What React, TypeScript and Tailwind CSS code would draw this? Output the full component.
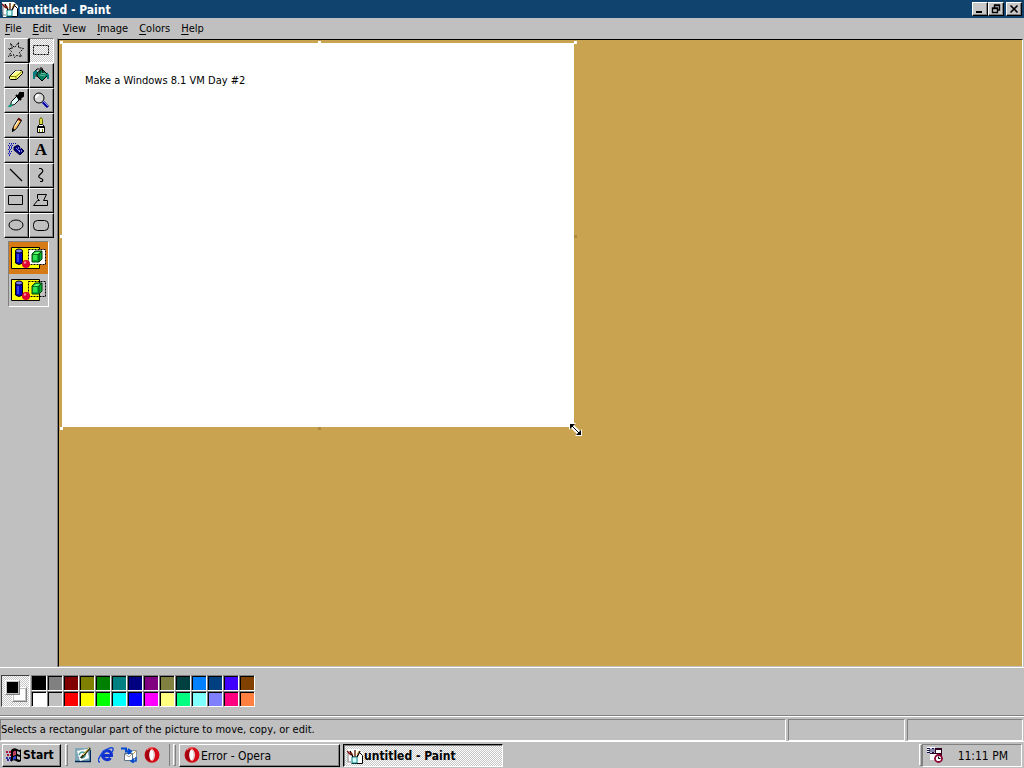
import React, { useState } from "react";

const raised =
  "border border-t-white border-l-white border-r-black border-b-black shadow-[inset_-1px_-1px_0_#808080]";
const dither =
  "bg-[repeating-conic-gradient(#ffffff_0%_25%,#c6c6c6_0%_50%)] bg-[length:2px_2px]";

function Icon({ children, size = 16 }: { children: React.ReactNode; size?: number }) {
  return (
    <svg width={size} height={size} viewBox="0 0 16 16" fill="none" aria-hidden="true" className="block shrink-0">
      {children}
    </svg>
  );
}

function PaintIcon({ size = 16 }: { size?: number }) {
  return (
    <Icon size={size}>
      <path d="M0 1h12l4 4v11H1z" fill="#fff" />
      <path d="M11.500 4.500h1l3 3v8h-11" stroke="#000" />
      <path d="M1 5v9h3" stroke="#808080" />
      <path d="M5 9h5v6H5z" fill="#d8ffff" stroke="#008080" />
      <path d="M6 9L3 3M10 9l3-6" stroke="#000" strokeWidth="1.500" />
      <path d="M8 9V2" stroke="#603018" strokeWidth="1.500" />
      <path d="M0 3l4 4" stroke="#800000" strokeWidth="1.500" />
      <path d="M4 4l2 3" stroke="#c04020" />
      <path d="M12 3l-2 4" stroke="#d09020" />
    </Icon>
  );
}

function OperaIcon({ size = 16 }: { size?: number }) {
  return (
    <Icon size={size}>
      <ellipse cx="8" cy="8" rx="7.5" ry="7.8" fill="#d50b18" />
      <path d="M3 3a7.5 7.5 0 0 0 0 10l3 2V1z" fill="#a50010" />
      <path d="M3 3q3-3 6-2" stroke="#ff6b60" />
      <ellipse cx="8" cy="8" rx="2.8" ry="5.8" fill="#fff" />
      <path d="M8 3q2 0 2 5t-2 5" stroke="#d8c0c0" />
    </Icon>
  );
}

const tools: { name: string; icon: React.ReactNode }[] = [
  {
    name: "Free-Form Select",
    icon: <path d="M2.500 1.500l4 4 4-5v5l5 1-4 4 2 4-5-1-2 2-1-3-5 2 3-5-3-3h4z" stroke="#000" strokeDasharray="2 1" />,
  },
  { name: "Select", icon: <path d="M.5 3.5h15v9H.5z" stroke="#000" strokeDasharray="2 1" /> },
  {
    name: "Eraser",
    icon: (
      <>
        <path d="M1.500 9.500l6-6h6l1 1v2l-6 6h-6l-1-1z" fill="#ffff80" stroke="#000" />
        <path d="M2 9.500h6l6-5M8 10v2" stroke="#808000" />
        <path d="M4 8l4-4h4" stroke="#fff" />
      </>
    ),
  },
  {
    name: "Fill With Color",
    icon: (
      <>
        <path d="M4 6l5-4 6 6-6 6-5-5z" fill="#008060" stroke="#000" />
        <path d="M6 6l7 1M7 8l5 1" stroke="#70c0a0" />
        <path d="M7 7V2q0-2 2-1l1 5M1 12V5l3-3h2M3 5v5" stroke="#000" />
        <path d="M0 5l4-2v3l-2 2v4H0zM14 5l2 3v4h-2z" fill="#008080" />
      </>
    ),
  },
  {
    name: "Pick Color",
    icon: (
      <>
        <path d="M2.5 13.5l1-4 5-5 3 3-5 5z" fill="#e0ffff" stroke="#000" />
        <path d="M8 3l5 5M10 5l2-4h3v3l-4 3z" fill="#000" stroke="#000" strokeWidth="2" />
        <path d="M1 13l4-1-2 3H0z" fill="#00a080" />
        <path d="M5 9l3-3" stroke="#fff" />
      </>
    ),
  },
  {
    name: "Magnifier",
    icon: (
      <>
        <circle cx="6" cy="6" r="5" fill="#d8d8d8" stroke="#000" />
        <path d="M3 6q0-3 3-3" stroke="#fff" strokeWidth="2" />
        <path d="M10 10l5 5" stroke="#0000a0" strokeWidth="3" />
        <path d="M10 9l5 5" stroke="#9090ff" />
      </>
    ),
  },
  {
    name: "Pencil",
    icon: (
      <>
        <path d="M4.5 14.5l1-5 5-8 3 2-5 8z" fill="#ffc060" stroke="#000" />
        <path d="M10 1.500l3 2" stroke="#600000" strokeWidth="2" />
        <path d="M4 15v-4l3 2z" fill="#000" />
        <path d="M7 9l3-5" stroke="#fff" />
      </>
    ),
  },
  {
    name: "Brush",
    icon: (
      <>
        <path d="M6.500 7.500v-5L8 .5l1.500 2v5" fill="#e0e040" stroke="#606000" />
        <path d="M4.500 15.500v-6l2-2h3l2 2v6z" fill="#fff" stroke="#000" />
        <path d="M5 10h6" stroke="#000" strokeWidth="2" />
        <path d="M6.500 12v3m3-3v3" stroke="#808000" />
      </>
    ),
  },
  {
    name: "Airbrush",
    icon: (
      <>
        <path d="M6 5l4-2 6 6-4 4-6-5z" fill="#000080" stroke="#000040" />
        <path d="M8 6l4 4" stroke="#8080ff" />
        <path d="M10 6h3M11 9h3" stroke="#fff" strokeDasharray="1 1" />
        <path d="M1 1.500h7M0 3.500h6M1 5.500h4M0 7.500h4M1 9.500h3M0 11.500h3M1 13.500h2" stroke="#0000b0" strokeDasharray="1 1" />
        <path d="M1.500 4v9M3.500 2v6" stroke="#4040c0" strokeDasharray="1 1" />
      </>
    ),
  },
  { name: "Text", icon: null },
  { name: "Line", icon: <path d="M2 2l12 12" stroke="#000" strokeWidth="1.3" /> },
  { name: "Curve", icon: <path d="M6 1.500h2q3 2 1 4L6 8.500q-1 2 2 3t1 3H7" stroke="#000" strokeWidth="1.2" /> },
  { name: "Rectangle", icon: <path d="M.5 3.5h14v9H.5z" stroke="#000" /> },
  { name: "Polygon", icon: <path d="M4.500 2.500h9l-3 6h4v5H.5l4-5h2l-2-2z" stroke="#000" /> },
  { name: "Ellipse", icon: <ellipse cx="8" cy="8" rx="7" ry="5" stroke="#000" /> },
  { name: "Rounded Rectangle", icon: <rect x=".5" y="3.5" width="15" height="10" rx="4" stroke="#000" /> },
];

function Toolbox() {
  const [tool, setTool] = useState("Select");
  return (
    <div className="grid grid-cols-2">
      {tools.map((t) => (
        <button
          key={t.name}
          aria-label={t.name}
          onClick={() => setTool(t.name)}
          className={`flex size-[25px] items-start pt-[3px] pl-[3px] ${
            tool === t.name
              ? `border border-t-[#808080] border-l-black border-r-white border-b-white ${dither}`
              : raised
          }`}
        >
          {t.icon ? (
            <Icon>{t.icon}</Icon>
          ) : (
            <span className="w-4 text-center font-['Liberation_Serif',serif] text-[17px] leading-4 font-bold">A</span>
          )}
        </button>
      ))}
    </div>
  );
}

function ModeArt({ transparent }: { transparent: boolean }) {
  return (
    <svg width="36" height="24" viewBox="0 0 36 24" fill="none" aria-hidden="true">
      <path d="M.5 1.5h28v21H.5z" fill="#ffff00" stroke="#000" />
      <path d="M17.500 3.500h17v15h-17z" fill={transparent ? "none" : "#fff"} stroke="#000" strokeDasharray="2 1" />
      <path d="M4.500 5v12q3.500 3 7 0V5z" fill="#0000c0" stroke="#000" />
      <ellipse cx="8" cy="5" rx="3.500" ry="2" fill="#8080ff" stroke="#000" />
      <path d="M7 8v8" stroke="#6080ff" />
      <circle cx="15" cy="18" r="4" fill="#e00030" />
      <path d="M13 17l2-1" stroke="#ff90a0" strokeWidth="2" />
      <path d="M21 8l3-3h7v8l-3 3h-7z" fill="#00b030" stroke="#004010" />
      <path d="M21 8h7v8m0-8l3-3" stroke="#004010" />
      <path d="M22 8l3-2h4l-2 2z" fill="#60ff70" />
      <path d="M22 9h4v5h-4z" fill="#30e050" />
    </svg>
  );
}

function ModePicker() {
  const [mode, setMode] = useState(0);
  return (
    <div className="mt-[3px] ml-1 w-[41px] border border-t-[#808080] border-l-[#808080] border-r-white border-b-white">
      {["Opaque selection", "Transparent selection"].map((label, i) => (
        <button
          key={label}
          aria-label={label}
          onClick={() => setMode(i)}
          className={`flex h-8 w-full items-center justify-center ${mode === i ? "bg-[#d57a14]" : ""}`}
        >
          <ModeArt transparent={i === 1} />
        </button>
      ))}
    </div>
  );
}

const palette = [
  ["Black", "bg-black"], ["Gray", "bg-[#808080]"], ["Maroon", "bg-[#800000]"], ["Olive", "bg-[#808000]"],
  ["Green", "bg-[#008000]"], ["Teal", "bg-[#008080]"], ["Navy", "bg-[#000080]"], ["Purple", "bg-[#800080]"],
  ["Khaki", "bg-[#808040]"], ["Pine", "bg-[#004040]"], ["Azure", "bg-[#0080ff]"], ["Steel blue", "bg-[#004080]"],
  ["Violet", "bg-[#4000ff]"], ["Brown", "bg-[#804000]"],
  ["White", "bg-white"], ["Silver", "bg-[#c0c0c0]"], ["Red", "bg-[#ff0000]"], ["Yellow", "bg-[#ffff00]"],
  ["Lime", "bg-[#00ff00]"], ["Cyan", "bg-[#00ffff]"], ["Blue", "bg-[#0000ff]"], ["Magenta", "bg-[#ff00ff]"],
  ["Cream", "bg-[#ffff80]"], ["Mint", "bg-[#00ff80]"], ["Sky", "bg-[#80ffff]"], ["Lavender", "bg-[#8080ff]"],
  ["Rose", "bg-[#ff0080]"], ["Orange", "bg-[#ff8040]"],
];

function ColorBar() {
  const [color, setColor] = useState("bg-black");
  return (
    <section aria-label="Colors" className="flex h-[48px] items-start border-t border-white pt-[7px] pl-px">
      <div className={`grid h-8 w-[29px] grid-cols-1 border border-t-[#404040] border-l-[#404040] border-r-white border-b-white ${dither}`}>
        <div className="col-start-1 row-start-1 mt-[11px] ml-[10px] size-[15px] border border-t-white border-l-white border-r-[#808080] border-b-[#808080] bg-[#c0c0c0] p-px">
          <div className="size-full bg-white" />
        </div>
        <div className="z-10 col-start-1 row-start-1 mt-1 ml-[3px] size-[15px] border border-t-white border-l-white border-r-[#808080] border-b-[#808080] bg-[#c0c0c0] p-px">
          <div className={`size-full ${color}`} />
        </div>
      </div>
      <div className="ml-px grid grid-cols-[repeat(14,16px)]">
        {palette.map(([name, bg]) => (
          <button
            key={name}
            aria-label={name}
            onClick={() => setColor(bg)}
            className={`size-4 border border-t-[#808080] border-l-[#808080] border-r-white border-b-white shadow-[inset_1px_1px_0_#000] ${bg}`}
          />
        ))}
      </div>
    </section>
  );
}

function Caption({ label, children }: { label: string; children: React.ReactNode }) {
  return (
    <button aria-label={label} className={`flex h-[14px] w-4 items-center justify-center bg-[#c8c8c8] ${raised}`}>
      <svg width="10" height="10" viewBox="0 0 10 10" fill="none" stroke="#000" aria-hidden="true">
        {children}
      </svg>
    </button>
  );
}

function Handle({ place }: { place: string }) {
  return <i className={`absolute size-[3px] ${place}`} />;
}

const pane = "border border-t-[#808080] border-l-[#808080] border-r-white border-b-white";

function Grip() {
  return <span className="h-[22px] w-[3px] border border-t-white border-l-white border-r-[#808080] border-b-[#808080]" />;
}

export default function App() {
  return (
    <div className="flex min-h-screen flex-col bg-[#c0c0c0] font-['DejaVu_Sans_Condensed','DejaVu_Sans',sans-serif] text-[11px] leading-4 text-black select-none">
      <header className="flex h-[18px] items-center bg-[#10446e] pr-[2px] pl-[2px] text-white">
        <PaintIcon />
        <h1 className="ml-px flex-1 pt-px text-[12px] font-bold">untitled - Paint</h1>
        <Caption label="Minimize">
          <path d="M1 8h6" strokeWidth="2" />
        </Caption>
        <Caption label="Restore">
          <path d="M3.500 4V1h5v5H7M3 1.500h6M1.500 4v4.500h5V4zM1 4.500h6" strokeWidth="1.400" />
        </Caption>
        <span className="w-[2px]" />
        <Caption label="Close">
          <path d="M1.500 1.500l7 7M8.500 1.500l-7 7" strokeWidth="1.600" />
        </Caption>
      </header>

      <nav className="flex h-[21px] items-center gap-[11px] pl-[5px]">
        {["File", "Edit", "View", "Image", "Colors", "Help"].map((m) => (
          <button key={m}>
            <span className="underline underline-offset-2">{m[0]}</span>
            {m.slice(1)}
          </button>
        ))}
      </nav>

      <main className="flex flex-1 pr-px">
        <aside className="-mt-px w-[58px] shrink-0 border-r border-[#808080] pl-1">
          <div className="w-[50px]">
            <Toolbox />
            <ModePicker />
          </div>
        </aside>
        <div className="flex-1 border border-t-black border-l-black border-r-white border-b-[#c0c0c0] bg-[#c9a350] p-[3px]">
          <div className="relative h-[384px] w-[512px] bg-white">
            <p className="pt-[30px] pl-[23px]">Make a Windows 8.1 VM Day #2</p>
            <Handle place="-top-[2px] -left-[2px] bg-white" />
            <Handle place="-top-[2px] left-[256px] bg-white" />
            <Handle place="-top-[2px] -right-[3px] bg-white" />
            <Handle place="top-[192px] -left-[2px] bg-white" />
            <Handle place="top-[192px] -right-[3px] bg-[#b08a40]" />
            <Handle place="-bottom-[3px] -left-[2px] bg-white" />
            <Handle place="-bottom-[3px] left-[256px] bg-[#b08a40]" />
            <svg width="13" height="13" viewBox="0 0 13 13" className="absolute -right-[8px] -bottom-[9px]" aria-hidden="true">
              <path d="M0 0h7L5 2l6 6 2-2v7H6l2-2-6-6-2 2z" fill="#fff" />
              <path d="M1 1h5L1 6zM12 12V7l-5 5z" fill="#000" />
              <path d="M3 3l7 7" stroke="#000" />
            </svg>
          </div>
        </div>
      </main>

      <ColorBar />

      <footer className="flex h-[26px] items-start gap-[2px] border-t border-[#808080] pr-px pb-px shadow-[inset_0_1px_0_#fff]">
        <p className={`mt-[3px] h-[22px] flex-1 pt-[2px] ${pane}`}>Selects a rectangular part of the picture to move, copy, or edit.</p>
        <span className={`mt-[3px] h-[22px] w-[117px] ${pane}`} />
        <span className={`mt-[3px] h-[22px] w-[116px] ${pane}`} />
      </footer>

      <div className="flex h-[27px] items-center border-t border-white pr-[2px] pl-[2px]">
        <button className={`flex h-[23px] w-[59px] items-center gap-px pl-[3px] text-[12px] font-bold ${raised}`}>
          <Icon>
            <path d="M5 3q3-3 6-1t4 0v12q-2 2-5 0t-5 1z" fill="#000" />
            <path d="M7 5q2-2 3-1v4L7 9z" fill="#c04060" />
            <path d="M11 4l3 1v3l-3-1z" fill="#c0c0c0" />
            <path d="M7 10l3-1v3l-3 1z" fill="#3040d0" />
            <path d="M11 9l3 1v3l-3-1z" fill="#c0c0c0" />
            <path d="M0 5h5M1 8h4" stroke="#b01040" strokeWidth="2" strokeDasharray="2 1" />
            <path d="M0 11h5M1 13h4" stroke="#3030a0" strokeWidth="2" strokeDasharray="2 1" />
          </Icon>
          Start
        </button>
        <div className="ml-1 flex items-center gap-[7px]">
          <Grip />
          <button aria-label="Show Desktop">
            <Icon>
              <path d="M0 1h16v14H0z" fill="#80a8b8" />
              <path d="M0 14.500h15.500V3" stroke="#002858" strokeWidth="1.500" />
              <path d="M2 4l10-2 2 9-9 3z" fill="#fff" />
              <path d="M4 8q1-3 4-3 3 1 2 4-2 3-5 1" stroke="#50a0a0" strokeWidth="1.500" />
              <path d="M6 11l9-10" stroke="#303010" strokeWidth="2" />
              <path d="M8 8l6-7" stroke="#ffe060" />
            </Icon>
          </button>
          <button aria-label="Internet Explorer">
            <Icon>
              <path d="M12.500 11a4.500 4.500 0 1 1 1-2.500H5" stroke="#1030d0" strokeWidth="3" />
              <path d="M2 15q-3 0-1-4Q5 3 12 1q5-1 2 4" stroke="#1848d8" strokeWidth="1.500" />
            </Icon>
          </button>
          <button aria-label="Outlook Express">
            <Icon>
              <path d="M6.500 3.500h9v8h-9z" fill="#fff" stroke="#8090a0" />
              <path d="M7 4l4 4 4-4" stroke="#d0b040" />
              <path d="M3.500 6.500h8v7h-8z" fill="#fff" stroke="#607088" />
              <path d="M4 7l4 3 3-3" stroke="#a0a0a0" />
              <path d="M0 1.500h5v3h4M7 2l3 2.500L7 7" stroke="#0048d0" strokeWidth="2" />
              <path d="M15 10v4h-4M13 12l-3 2 3 2" stroke="#0048d0" strokeWidth="1.500" />
            </Icon>
          </button>
          <button aria-label="Opera">
            <OperaIcon />
          </button>
        </div>
        <div className="ml-[9px] flex items-center gap-[3px]">
          <span className="h-[22px] w-px bg-[#808080]" />
          <Grip />
          <button className={`flex h-[23px] w-[161px] items-center pl-1 text-[12px] ${raised}`}>
            <OperaIcon />
            <span className="pt-px pl-px">Error - Opera</span>
          </button>
          <button className={`flex h-[23px] w-[160px] items-center border border-t-black border-l-black border-r-white border-b-white pt-px pl-[3px] text-[12px] font-bold shadow-[inset_1px_1px_0_#808080] ${dither}`}>
            <PaintIcon />
            <span className="pt-px pl-px">untitled - Paint</span>
          </button>
        </div>
        <div className="ml-auto flex items-center">
          <Grip />
          <div className={`flex h-[23px] w-[100px] items-center justify-between pr-[13px] pl-1 text-[12px] ${pane}`}>
            <Icon>
              <path d="M3 1h12v12H3z" fill="#300020" />
              <path d="M3 7h8v6H3zM9 3h5v3H9z" fill="#fff" />
              <path d="M0 0h8v6H0z" fill="#fff" />
              <path d="M0 1.500h3v4H0M0 3.500h3M5 1.500h2v4H5z" stroke="#101050" />
              <circle cx="11.500" cy="11.500" r="3.500" fill="#fff" stroke="#900030" strokeWidth="1.800" />
              <path d="M11.500 9.500v2h2" stroke="#000" />
            </Icon>
            <time className="pt-px">11:11 PM</time>
          </div>
        </div>
      </div>
    </div>
  );
}
